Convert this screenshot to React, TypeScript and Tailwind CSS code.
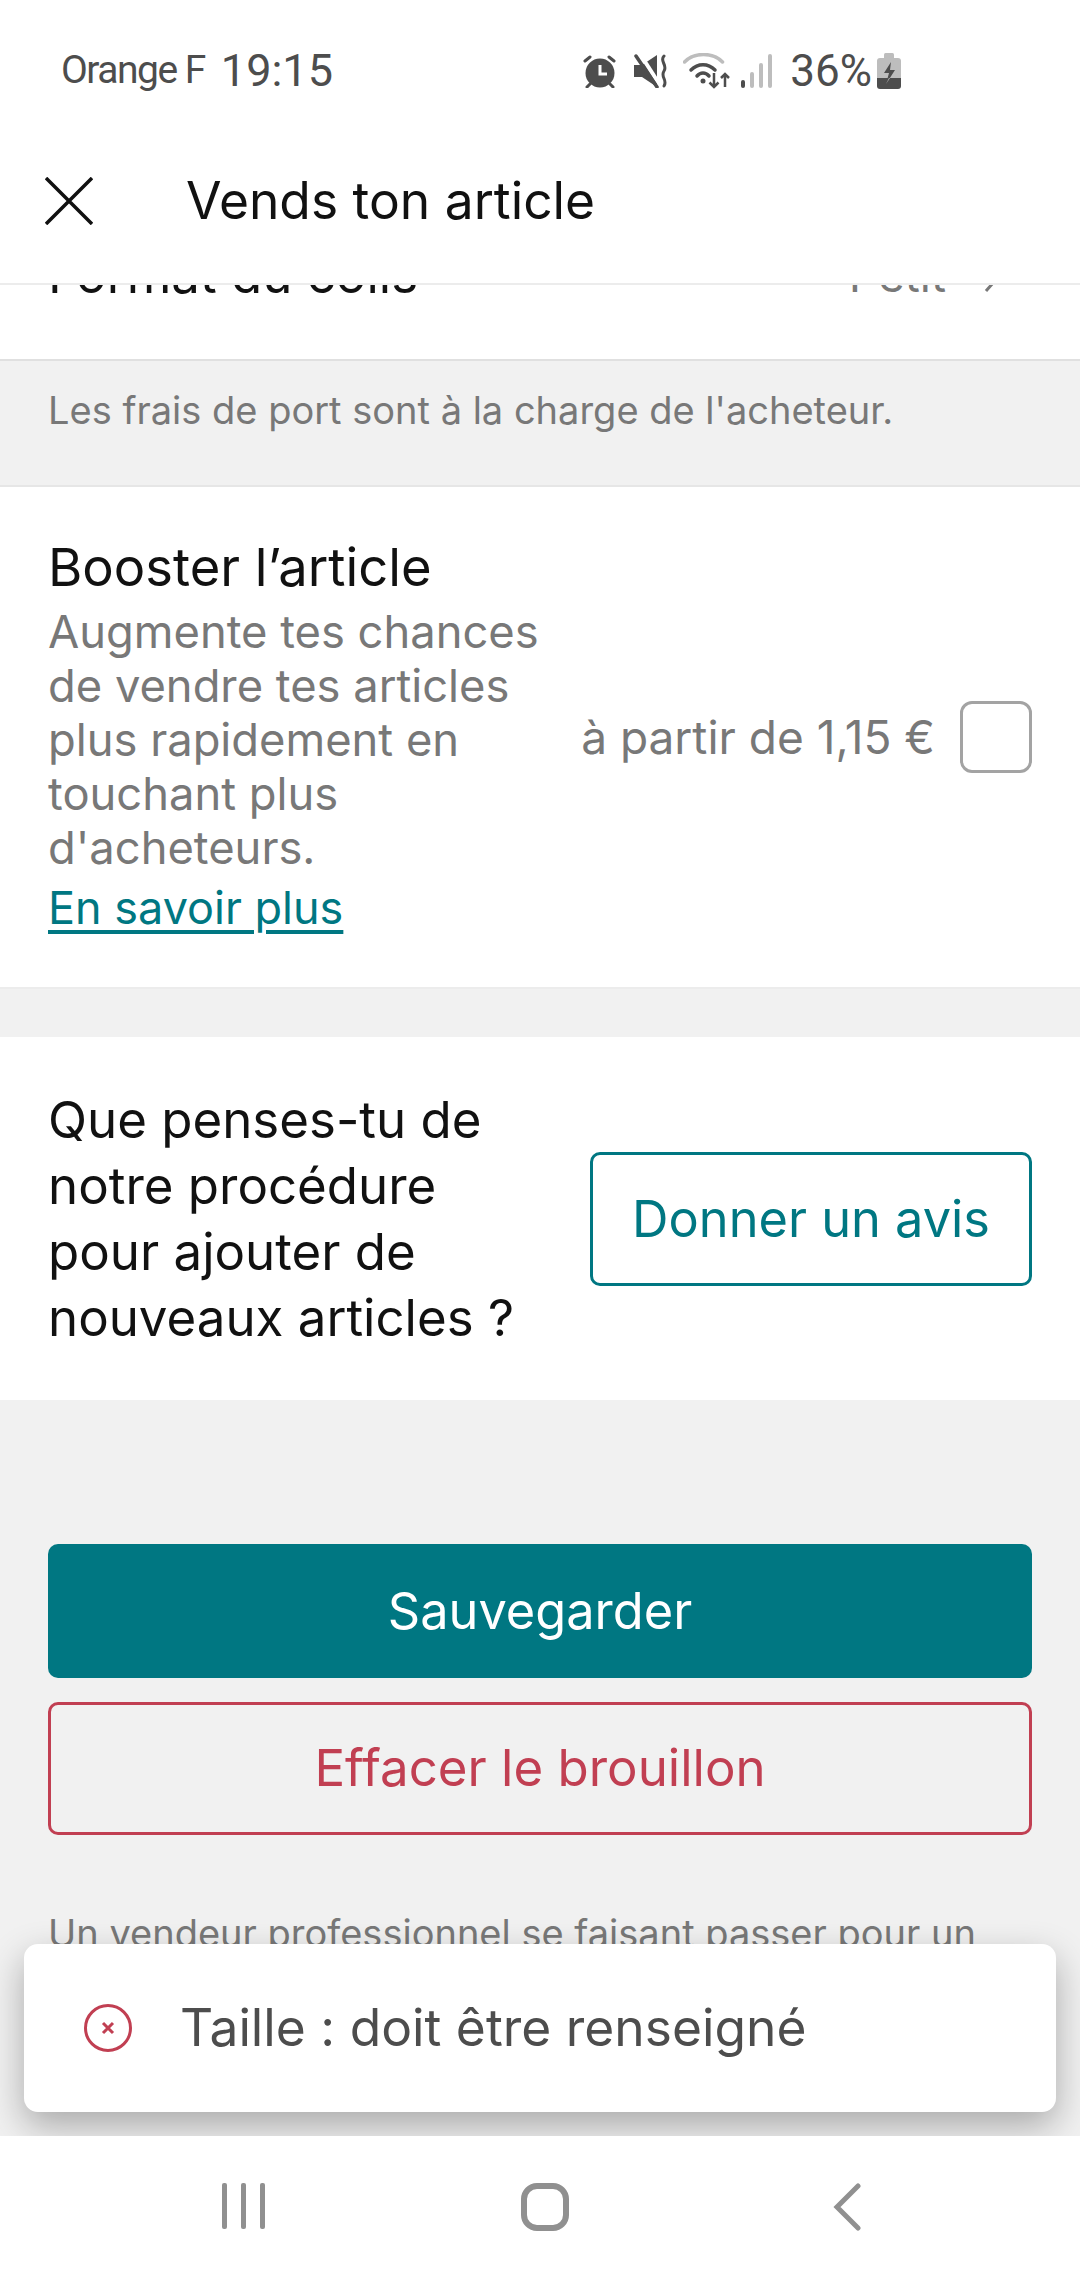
const inter = { fontFamily: "Inter, sans-serif" }
const roboto = { fontFamily: "Roboto, sans-serif" }

const StatusIcons = () => (
  <div className="flex items-center">
    <svg width="33" height="34" viewBox="0 0 33 34" className="mr-[18px]">
      <circle cx="17" cy="19" r="14.5" fill="#4d4d4d" />
      <path d="M17 11v9h7" stroke="#fff" strokeWidth="3" fill="none" />
      <path d="M2 7l5-4M31 7l-5-4M7 30l-3 3M27 30l3 3" stroke="#4d4d4d" strokeWidth="3" strokeLinecap="round" />
    </svg>
    <svg width="33" height="34" viewBox="0 0 33 34" className="mr-[16px]">
      <path d="M0 11h8L23 1v32L8 23H0z" fill="#4d4d4d" />
      <path d="M6 0l20 31" stroke="#fff" strokeWidth="4" />
      <path d="M2 2l21 31" stroke="#4d4d4d" strokeWidth="3.5" strokeLinecap="round" />
      <path d="M30 2c-5 5 4 9 0 15s4 9 0 15" stroke="#4d4d4d" strokeWidth="3" fill="none" strokeLinecap="round" />
    </svg>
    <svg width="47" height="36" viewBox="0 0 47 36" className="mr-[11px]">
      <path d="M1.5 9C11-1 30-1 39.5 9" stroke="#bdbdbd" strokeWidth="3.5" fill="none" strokeLinecap="round" />
      <path d="M8 17c7-7 17-7 24 0M14 23c3.500-4 8.500-4 12 0" stroke="#4d4d4d" strokeWidth="3.5" fill="none" strokeLinecap="round" />
      <circle cx="20" cy="28" r="2.500" fill="#4d4d4d" />
      <path d="M31 20v14M26.500 29.500L31 34l4.500-4.500M42 34V21M38 25l4-4 4 4" stroke="#4d4d4d" strokeWidth="2.500" fill="none" />
    </svg>
    <svg width="32" height="34" viewBox="0 0 32 34" className="mr-[17px]">
      <rect x="0" y="26" width="4" height="8" rx="2" fill="#4d4d4d" />
      <rect x="9" y="18" width="4" height="16" rx="2" fill="#bdbdbd" />
      <rect x="18" y="9" width="4" height="25" rx="2" fill="#bdbdbd" />
      <rect x="27" y="0" width="4" height="34" rx="2" fill="#bdbdbd" />
    </svg>
    <span className="text-[44px] leading-none text-[#4d4d4d]" style={roboto}>
      36%
    </span>
    <svg width="24" height="36" viewBox="0 0 24 36" className="ml-[5px]">
      <rect x="7" y="0" width="10" height="6" rx="1.500" fill="#bdbdbd" />
      <path d="M0 8a3 3 0 0 1 3-3h18a3 3 0 0 1 3 3v17H0z" fill="#bdbdbd" />
      <path d="M0 25h24v8a3 3 0 0 1-3 3H3a3 3 0 0 1-3-3z" fill="#4d4d4d" />
      <path d="M14 9l-7 11h5l-3 11 9-14h-5z" fill="#4d4d4d" />
      <path d="M12 25l-3 6 4-6z" fill="#bdbdbd" />
    </svg>
  </div>
)

export default function App() {
  return (
    <div className="relative flex h-[2280px] w-[1080px] flex-col overflow-hidden bg-white" style={inter}>
      <div className="flex h-[140px] shrink-0 items-center pl-[61px] pr-[179px] pt-[1px]">
        <span className="text-[39px] leading-none tracking-[-1.5px] text-[#4d4d4d]" style={roboto}>
          Orange F
        </span>
        <span className="ml-[16px] text-[45px] leading-none text-[#4d4d4d]" style={roboto}>
          19:15
        </span>
        <div className="ml-auto">
          <StatusIcons />
        </div>
      </div>

      <header className="z-10 flex h-[145px] shrink-0 items-center border-b-2 border-[#ececec] bg-white pb-[22px] pl-[45px]">
        <svg width="48" height="48" viewBox="0 0 48 48" className="shrink-0">
          <path d="M1 1l46 46M47 1L1 47" stroke="#111" strokeWidth="3.5" />
        </svg>
        <h1 className="ml-[93px] text-[51.5px] font-normal leading-none text-[#111]">Vends ton article</h1>
      </header>

      <main className="relative flex-1 overflow-hidden bg-[#f1f1f1]">
        <div className="-mt-[94px] flex h-[170px] items-center justify-between border-b-2 border-[#e0e0e0] bg-white pl-[48px] pr-[76px]">
          <span className="text-[51px] text-[#111]">Format du colis</span>
          <span className="flex items-center gap-[38px] text-[46px] text-[#787878]">
            Petit
            <svg width="20" height="36" viewBox="0 0 20 36">
              <path d="M2 2l14 16L2 34" stroke="#787878" strokeWidth="3" fill="none" />
            </svg>
          </span>
        </div>

        <p className="h-[126px] border-b-2 border-[#e6e6e6] pl-[48px] pt-[24px] text-[38px] leading-[50px] text-[#787878]">
          Les frais de port sont à la charge de l'acheteur.
        </p>

        <section className="flex h-[502px] items-center border-b-2 border-[#ececec] bg-white pl-[48px] pr-[48px]">
          <div className="w-[525px] shrink-0">
            <h2 className="text-[52.5px] font-normal leading-[56px] text-[#111]">Booster l’article</h2>
            <p className="mt-[10px] text-[45.3px] leading-[54px] text-[#787878]">
              Augmente tes chances de vendre tes articles plus rapidement en touchant plus d'acheteurs.
            </p>
            <a className="mt-[6px] block text-[45px] leading-[54px] text-[#007782] underline underline-offset-[6px]">
              En savoir plus
            </a>
          </div>
          <span className="ml-auto shrink-0 whitespace-nowrap text-[46px] leading-none text-[#787878]">
            à partir de 1,15 €
          </span>
          <div className="ml-[25px] h-[72px] w-[72px] shrink-0 rounded-[12px] border-[3px] border-[#a3a3a3]" />
        </section>

        <section className="mt-[48px] flex h-[363px] items-center justify-between bg-white px-[48px]">
          <p className="w-[510px] text-[51px] leading-[66px] text-[#111]">
            Que penses-tu de notre procédure pour ajouter de nouveaux articles ?
          </p>
          <button className="h-[134px] w-[442px] rounded-[10px] border-[3px] border-[#007782] text-[50.5px] text-[#007782]">
            Donner un avis
          </button>
        </section>

        <div className="flex flex-col gap-[24px] px-[48px] pt-[144px]">
          <button className="h-[134px] rounded-[10px] bg-[#007782] text-[50.5px] text-white">Sauvegarder</button>
          <button className="h-[133px] rounded-[10px] border-[3px] border-[#c13f52] text-[51px] text-[#c13f52]">
            Effacer le brouillon
          </button>
        </div>

        <p className="whitespace-nowrap px-[48px] pt-[73px] text-[38px] leading-[50px] text-[#787878]">
          Un vendeur professionnel se faisant passer pour un
        </p>

        <div className="absolute bottom-[24px] left-[24px] right-[24px] flex h-[168px] items-center rounded-[14px] bg-white pl-[60px] shadow-[0_14px_36px_rgba(0,0,0,0.3)]">
          <svg width="48" height="48" viewBox="0 0 48 48" className="shrink-0">
            <circle cx="24" cy="24" r="22.500" stroke="#c13f52" strokeWidth="3" fill="none" />
            <path d="M19 19l10 10M29 19L19 29" stroke="#c13f52" strokeWidth="3" />
          </svg>
          <span className="ml-[48px] text-[51.5px] leading-none text-[#4d4d4d]">Taille : doit être renseigné</span>
        </div>
      </main>

      <nav className="flex h-[144px] shrink-0 items-start bg-white pt-[47px]">
        <div className="ml-[222px] flex h-[46px] w-[43px] justify-between">
          <div className="h-full w-[5px] rounded-[2px] bg-[#909090]" />
          <div className="h-full w-[5px] rounded-[2px] bg-[#909090]" />
          <div className="h-full w-[5px] rounded-[2px] bg-[#909090]" />
        </div>
        <div className="ml-[256px] h-[48px] w-[48px] rounded-[16px] border-[6px] border-[#909090]" />
        <svg width="28" height="48" viewBox="0 0 28 48" className="ml-[264px]">
          <path d="M25 3L4 24l21 21" stroke="#909090" strokeWidth="5" fill="none" strokeLinecap="round" />
        </svg>
      </nav>
    </div>
  )
}
